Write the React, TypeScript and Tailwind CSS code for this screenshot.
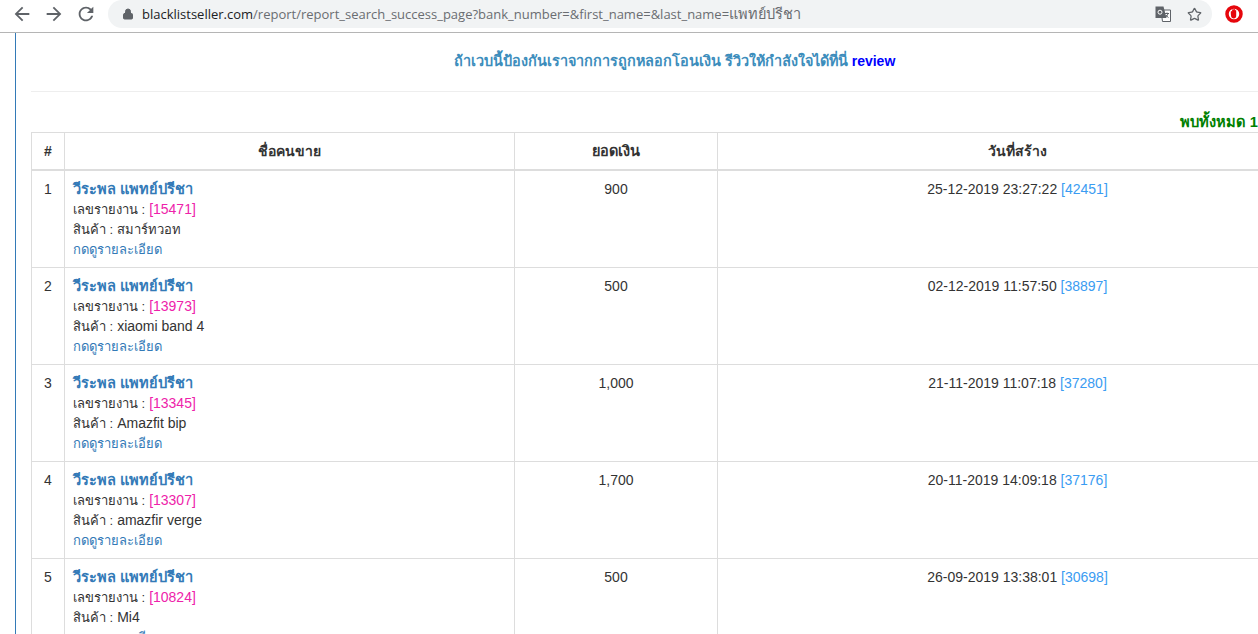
import { Lock, Star } from 'lucide-react';

const rows = [
  { id: 1, report: '15471', product: 'สมาร์ทวอท', thai: true, amount: '900', date: '25-12-2019 23:27:22', ref: '42451' },
  { id: 2, report: '13973', product: 'xiaomi band 4', thai: false, amount: '500', date: '02-12-2019 11:57:50', ref: '38897' },
  { id: 3, report: '13345', product: 'Amazfit bip', thai: false, amount: '1,000', date: '21-11-2019 11:07:18', ref: '37280' },
  { id: 4, report: '13307', product: 'amazfir verge', thai: false, amount: '1,700', date: '20-11-2019 14:09:18', ref: '37176' },
  { id: 5, report: '10824', product: 'Mi4', thai: false, amount: '500', date: '26-09-2019 13:38:01', ref: '30698' },
];

const NavIcon = ({ d }: { d: string }) => (
  <svg width="22" height="22" viewBox="0 0 24 24" fill="#5f6368">
    <path d={d} />
  </svg>
);

const TranslateIcon = () => (
  <svg width="16" height="16" viewBox="0 0 16 16">
    <path d="M6 4h9.500v11.500H7.500z" fill="#fff" stroke="#5f6368" strokeWidth="1" />
    <path d="M0.500 0.500h8l3 11.500H0.500z" fill="#5f6368" />
    <circle cx="5" cy="6.200" r="2" fill="none" stroke="#fff" strokeWidth="1" />
    <path d="M10 7.500h4M12 6.500v1M13 7.500c-.5 2-2 3.500-3 4M11 9c.5 1 1.500 2 2.500 2.500" fill="none" stroke="#5f6368" strokeWidth="1" />
  </svg>
);

const OperaIcon = () => (
  <svg width="18" height="18" viewBox="0 0 18 18">
    <circle cx="9" cy="9" r="7" fill="#fff" stroke="#e6060c" strokeWidth="3.500" />
    <path d="M5.800 9V6.500a.7.7 0 0 1 1.300 0V5a.7.7 0 0 1 1.400 0v-.5a.7.7 0 0 1 1.400 0v1a.7.7 0 0 1 1.300 0V11c0 1.500-1 2.500-2.500 2.500-1.200 0-2-.6-2.500-1.700z" fill="#e6060c" />
  </svg>
);

const App = () => {
  return (
    <div className="h-[634px] w-[1258px] overflow-hidden bg-white font-['Liberation_Sans','Noto_Sans',sans-serif] text-[14px] leading-5 text-[#333]">
      {/* Browser toolbar */}
      <div className="flex h-[33px] items-start border-b border-[#b5b5b5] bg-white">
        <div className="flex w-[108px] shrink-0 items-center gap-[10px] pt-[3px] pl-[11px]">
          <NavIcon d="M20 11H7.830l5.590-5.590L12 4l-8 8 8 8 1.410-1.410L7.830 13H20v-2z" />
          <NavIcon d="M12 4l-1.410 1.410L16.170 11H4v2h12.170l-5.580 5.590L12 20l8-8z" />
          <NavIcon d="M17.650 6.350A7.958 7.958 0 0 0 12 4c-4.420 0-7.990 3.580-7.990 8s3.570 8 7.990 8c3.730 0 6.840-2.550 7.730-6h-2.080A5.990 5.990 0 0 1 12 18c-3.310 0-6-2.690-6-6s2.690-6 6-6c1.660 0 3.140.69 4.220 1.780L13 11h7V4l-2.350 2.350z" />
        </div>
        <div className="flex h-[28px] w-[1104px] shrink-0 items-center rounded-full bg-[#f1f3f4] pr-[10px] pl-[14px]">
          <Lock size={12} fill="#5f6368" className="text-[#5f6368]" />
          <span className="ml-[8px] whitespace-nowrap font-['Open_Sans',sans-serif] text-[13px] text-[#202124]">
            blacklistseller.com
            <span className="text-[#6a6d71]">
              /report/report_search_success_page?bank_number=&amp;first_name=&amp;last_name=
              <span className="text-[14.500px]">แพทย์ปรีชา</span>
            </span>
          </span>
          <div className="ml-auto flex items-center gap-[16px] text-[#5f6368]">
            <TranslateIcon />
            <Star size={15} strokeWidth={2} />
          </div>
        </div>
        <div className="ml-[13px] pt-[5px]">
          <OperaIcon />
        </div>
      </div>

      {/* Page */}
      <div className="ml-[15px] h-[601px] w-[1300px] border-l border-[#337ab7] pl-[15px]">
        <div className="w-[1287px]">
          <div className="flex h-[59px] items-end justify-center border-b border-[#eee] pb-[20px] text-[14.400px] font-bold text-[#3c8dbc]">
            <p>
              ถ้าเวบนี้ป้องกันเราจากการถูกหลอกโอนเงิน รีวิวให้กำลังใจได้ที่นี่{' '}
              <a className="text-[14px] text-[#0000ff]">review</a>
            </p>
          </div>
          <div className="h-[40px] pt-[20px] pr-[60px] text-right text-[14.700px] font-bold text-[#008000]">พบทั้งหมด 1</div>
          <table className="w-[1287px] table-fixed border-collapse border border-[#ddd]">
            <colgroup>
              <col className="w-[33px]" />
              <col className="w-[450px]" />
              <col className="w-[203px]" />
              <col />
            </colgroup>
            <thead>
              <tr className="h-[37px] text-center font-bold">
                <th className="border border-b-2 border-[#ddd]">#</th>
                <th className="border border-b-2 border-[#ddd]">ชื่อคนขาย</th>
                <th className="border border-b-2 border-[#ddd] text-[14.500px]">ยอดเงิน</th>
                <th className="border border-b-2 border-[#ddd]">วันที่สร้าง</th>
              </tr>
            </thead>
            <tbody>
              {rows.map((row) => (
                <tr key={row.id} className="h-[97px] align-top">
                  <td className="border border-[#ddd] p-2 text-center">{row.id}</td>
                  <td className="border border-[#ddd] p-2">
                    <div className="h-5 text-[14.600px] font-bold text-[#337ab7]">วีระพล แพทย์ปรีชา</div>
                    <div className="h-5">
                      <span className="text-[13px]">เลขรายงาน :</span> <span className="text-[#ee22aa]">[{row.report}]</span>
                    </div>
                    <div className="h-5">
                      <span className="text-[13px]">สินค้า :</span>{' '}
                      <span className={row.thai ? 'text-[13px]' : ''}>{row.product}</span>
                    </div>
                    <div className="h-5 pt-px text-[13px] text-[#337ab7]">กดดูรายละเอียด</div>
                  </td>
                  <td className="border border-[#ddd] p-2 text-center">{row.amount}</td>
                  <td className="border border-[#ddd] p-2 text-center">
                    {row.date} <span className="text-[#3a9cf2]">[{row.ref}]</span>
                  </td>
                </tr>
              ))}
            </tbody>
          </table>
        </div>
      </div>
    </div>
  );
};

export default App;
